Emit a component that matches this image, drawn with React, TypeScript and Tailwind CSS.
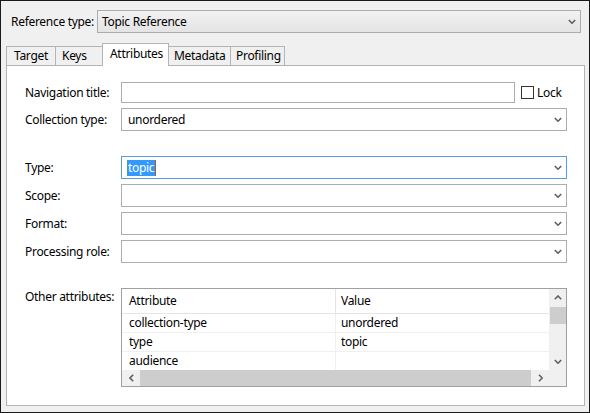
import React from "react";

const Chevron = ({ dir = "down" }: { dir?: "down" | "up" | "left" | "right" }) => {
  const d =
    dir === "down"
      ? "M0.8 1 L4 4.2 L7.2 1"
      : dir === "up"
      ? "M0.8 4.2 L4 1 L7.2 4.2"
      : dir === "left"
      ? "M4.2 0.8 L1 4 L4.2 7.2"
      : "M1 0.8 L4.2 4 L1 7.2";
  const w = dir === "down" || dir === "up" ? 8 : 5;
  const h = dir === "down" || dir === "up" ? 5 : 8;
  return (
    <svg width={w} height={h} viewBox={`0 0 ${w} ${h}`} className="shrink-0">
      <path d={d} fill="none" stroke="#606060" strokeWidth="1.6" />
    </svg>
  );
};

const Select = ({
  value,
  focused,
  selected,
}: {
  value?: string;
  focused?: boolean;
  selected?: boolean;
}) => (
  <div
    className={`flex-1 h-[23px] border bg-white flex items-center pl-[5px] pr-[3px] ${
      focused ? "border-[#569de5]" : "border-[#adadad]"
    }`}
  >
    {selected ? (
      <span className="bg-[#3399ff] text-white leading-[16px] px-[1px] border-r border-[#c05a00]">
        {value}
      </span>
    ) : (
      <span className="px-[1px]">{value}</span>
    )}
    <span className="ml-auto mr-[1px]">
      <Chevron />
    </span>
  </div>
);

const Row = ({ label, children }: { label: string; children: React.ReactNode }) => (
  <div className="flex items-center">
    <div className="w-[97px] shrink-0 whitespace-nowrap pl-[1px]">{label}</div>
    {children}
  </div>
);

export default function App() {
  const tabs = [
    { name: "Target", w: "w-[49px]", pl: "pl-[7px]" },
    { name: "Keys", w: "w-[47px]", pl: "pl-[6px]" },
    { name: "Attributes", w: "w-[67px]", pl: "pl-[7px]", active: true },
    { name: "Metadata", w: "w-[61px]", pl: "pl-[5px]" },
    { name: "Profiling", w: "w-[55px]", pl: "pl-[5px]" },
  ];
  return (
    <div
      className="w-[590px] h-[413px] bg-[#f0f0f0] border border-[#1a1a1a] flex flex-col text-[12px] tracking-[-0.3px] text-black leading-[16px] overflow-hidden whitespace-nowrap"
      style={{ fontFamily: '"Segoe UI", "Noto Sans", sans-serif' }}
    >
      {/* Reference type */}
      <div className="flex items-center mt-[9px] ml-[9px]">
        <div className="w-[87px] shrink-0 pl-[1px]">Reference type:</div>
        <div className="w-[484px] h-[23px] border border-[#acacac] bg-gradient-to-b from-[#f2f2f2] to-[#e4e4e4] flex items-center pl-[4px] pr-[4px]">
          <span>Topic Reference</span>
          <span className="ml-auto">
            <Chevron />
          </span>
        </div>
      </div>

      {/* Tabs */}
      <div className="flex items-end ml-[5px] mt-[10px] h-[22px] relative z-10">
        {tabs.map((t, i) => (
          <div
            key={t.name}
            className={`${t.w} ${t.pl} flex items-center border-t border-[#b4b4b4] ${
              t.active
                ? "h-[23px] bg-white border-l border-r -mb-px pb-[2px]"
                : `h-[19px] bg-[#f0f0f0] ${i === 3 ? "" : "border-l"} ${i === 4 ? "border-r" : ""}`
            }`}
          >
            {t.name}
          </div>
        ))}
      </div>

      {/* Panel */}
      <div className="ml-[5px] w-[579px] h-[341px] bg-white border border-[#b4b4b4] pl-[17px] pr-[17px] pt-[16px] flex flex-col">
        <Row label="Navigation title:">
          <div className="flex-1 flex items-center">
            <div className="w-[394px] h-[21px] border border-[#adadad] bg-white" />
            <div className="ml-[6px] w-[13px] h-[13px] border border-[#333333] bg-white" />
            <span className="ml-[3px]">Lock</span>
          </div>
        </Row>
        <div className="mt-[5px]">
          <Row label="Collection type:">
            <Select value="unordered" />
          </Row>
        </div>
        <div className="mt-[25px] flex flex-col gap-[5px]">
          <Row label="Type:">
            <Select value="topic" focused selected />
          </Row>
          <Row label="Scope:">
            <Select />
          </Row>
          <Row label="Format:">
            <Select />
          </Row>
          <Row label="Processing role:">
            <Select />
          </Row>
        </div>

        {/* Other attributes */}
        <div className="mt-[25px] flex items-start">
          <div className="w-[97px] shrink-0 mt-[1px] pl-[1px]">Other attributes:</div>
          <div className="flex-1 h-[99px] border border-[#a0a0a0] bg-white flex flex-col">
            <div className="flex h-[81px]">
              <div className="flex-1 flex flex-col">
                <div className="flex h-[25px] border-b border-[#e5e5e5]">
                  <div className="w-[214px] border-r border-[#e5e5e5] pl-[7px] flex items-center">
                    Attribute
                  </div>
                  <div className="flex-1 pl-[5px] flex items-center">Value</div>
                </div>
                {[
                  ["collection-type", "unordered"],
                  ["type", "topic"],
                  ["audience", ""],
                ].map(([a, v], i) => (
                  <div
                    key={a}
                    className={`flex ${i < 2 ? "h-[19px] border-b border-[#f0f0f0]" : "h-[18px]"}`}
                  >
                    <div className="w-[214px] border-r border-[#f0f0f0] pl-[7px] flex items-center">
                      {a}
                    </div>
                    <div className="flex-1 pl-[5px] flex items-center">{v}</div>
                  </div>
                ))}
              </div>
              {/* vertical scrollbar */}
              <div className="w-[17px] bg-[#f0f0f0] flex flex-col items-center">
                <div className="h-[17px] flex items-center justify-center">
                  <Chevron dir="up" />
                </div>
                <div className="w-[16px] h-[17px] bg-[#cdcdcd] mt-[1px]" />
                <div className="flex-1" />
                <div className="h-[17px] flex items-center justify-center">
                  <Chevron dir="down" />
                </div>
              </div>
            </div>
            {/* horizontal scrollbar */}
            <div className="flex h-[16px] bg-[#f0f0f0]">
              <div className="w-[18px] flex items-center justify-center">
                <Chevron dir="left" />
              </div>
              <div className="w-[391px] bg-[#cdcdcd]" />
              <div className="w-[18px] flex items-center justify-center">
                <Chevron dir="right" />
              </div>
              <div className="flex-1" />
            </div>
          </div>
        </div>
      </div>
    </div>
  );
}
